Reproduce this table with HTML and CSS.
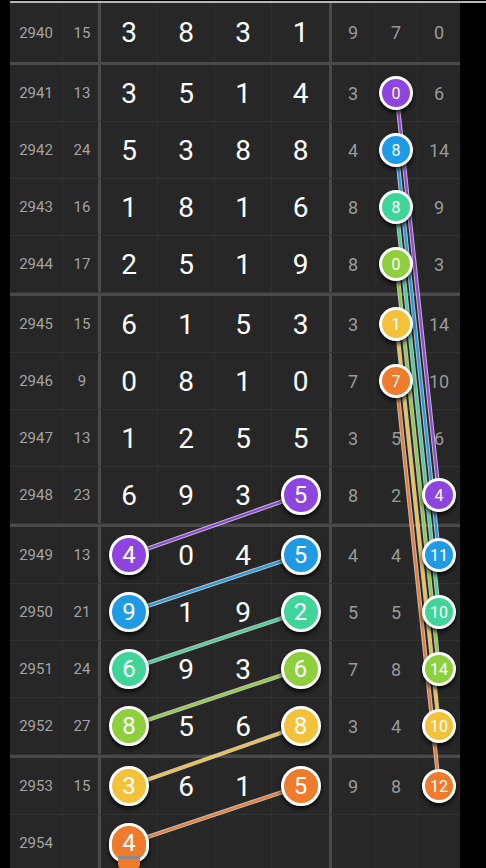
FILE: index.html
```html
<!DOCTYPE html>
<html lang="en">
<head>
  <meta charset="UTF-8">
  <meta name="viewport" content="width=device-width, initial-scale=1.0">
  <title>Draw Trend</title>
  <link rel="stylesheet" href="styles.css">
</head>
<body>
  <div class="screen">
    <div class="topline"></div>
    <div class="board">
      <div class="group">
        <div class="row first">
          <div class="issue">2940</div><div class="sum">15</div>
          <div class="d">3</div><div class="d">8</div><div class="d">3</div><div class="d d4">1</div>
          <div class="r">9</div><div class="r">7</div><div class="r">0</div>
        </div>
      </div>
      <div class="group">
        <div class="row">
          <div class="issue">2941</div><div class="sum">13</div>
          <div class="d">3</div><div class="d">5</div><div class="d">1</div><div class="d d4">4</div>
          <div class="r">3</div><div class="r"><span class="ball sm purple">0</span></div><div class="r">6</div>
        </div>
        <div class="row">
          <div class="issue">2942</div><div class="sum">24</div>
          <div class="d">5</div><div class="d">3</div><div class="d">8</div><div class="d d4">8</div>
          <div class="r">4</div><div class="r"><span class="ball sm blue">8</span></div><div class="r">14</div>
        </div>
        <div class="row">
          <div class="issue">2943</div><div class="sum">16</div>
          <div class="d">1</div><div class="d">8</div><div class="d">1</div><div class="d d4">6</div>
          <div class="r">8</div><div class="r"><span class="ball sm teal">8</span></div><div class="r">9</div>
        </div>
        <div class="row">
          <div class="issue">2944</div><div class="sum">17</div>
          <div class="d">2</div><div class="d">5</div><div class="d">1</div><div class="d d4">9</div>
          <div class="r">8</div><div class="r"><span class="ball sm lime">0</span></div><div class="r">3</div>
        </div>
      </div>
      <div class="group">
        <div class="row">
          <div class="issue">2945</div><div class="sum">15</div>
          <div class="d">6</div><div class="d">1</div><div class="d">5</div><div class="d d4">3</div>
          <div class="r">3</div><div class="r"><span class="ball sm yellow">1</span></div><div class="r">14</div>
        </div>
        <div class="row">
          <div class="issue">2946</div><div class="sum">9</div>
          <div class="d">0</div><div class="d">8</div><div class="d">1</div><div class="d d4">0</div>
          <div class="r">7</div><div class="r"><span class="ball sm orange">7</span></div><div class="r">10</div>
        </div>
        <div class="row">
          <div class="issue">2947</div><div class="sum">13</div>
          <div class="d">1</div><div class="d">2</div><div class="d">5</div><div class="d d4">5</div>
          <div class="r">3</div><div class="r">5</div><div class="r">6</div>
        </div>
        <div class="row">
          <div class="issue">2948</div><div class="sum">23</div>
          <div class="d">6</div><div class="d">9</div><div class="d">3</div><div class="d d4"><span class="ball purple">5</span></div>
          <div class="r">8</div><div class="r">2</div><div class="r"><span class="ball sm purple">4</span></div>
        </div>
      </div>
      <div class="group">
        <div class="row">
          <div class="issue">2949</div><div class="sum">13</div>
          <div class="d"><span class="ball purple">4</span></div><div class="d">0</div><div class="d">4</div><div class="d d4"><span class="ball blue">5</span></div>
          <div class="r">4</div><div class="r">4</div><div class="r"><span class="ball sm blue">11</span></div>
        </div>
        <div class="row">
          <div class="issue">2950</div><div class="sum">21</div>
          <div class="d"><span class="ball blue">9</span></div><div class="d">1</div><div class="d">9</div><div class="d d4"><span class="ball teal">2</span></div>
          <div class="r">5</div><div class="r">5</div><div class="r"><span class="ball sm teal">10</span></div>
        </div>
        <div class="row">
          <div class="issue">2951</div><div class="sum">24</div>
          <div class="d"><span class="ball teal">6</span></div><div class="d">9</div><div class="d">3</div><div class="d d4"><span class="ball lime">6</span></div>
          <div class="r">7</div><div class="r">8</div><div class="r"><span class="ball sm lime">14</span></div>
        </div>
        <div class="row">
          <div class="issue">2952</div><div class="sum">27</div>
          <div class="d"><span class="ball lime">8</span></div><div class="d">5</div><div class="d">6</div><div class="d d4"><span class="ball yellow">8</span></div>
          <div class="r">3</div><div class="r">4</div><div class="r"><span class="ball sm yellow">10</span></div>
        </div>
      </div>
      <div class="group">
        <div class="row">
          <div class="issue">2953</div><div class="sum">15</div>
          <div class="d"><span class="ball yellow">3</span></div><div class="d">6</div><div class="d">1</div><div class="d d4"><span class="ball orange">5</span></div>
          <div class="r">9</div><div class="r">8</div><div class="r"><span class="ball sm orange">12</span></div>
        </div>
        <div class="row">
          <div class="issue">2954</div><div class="sum"></div>
          <div class="d"><span class="ball orange pending">4<span class="tail"></span></span></div><div class="d"></div><div class="d"></div><div class="d d4"></div>
          <div class="r"></div><div class="r"></div><div class="r"></div>
        </div>
      </div>
    </div>

    <!-- trend lines between hit balls -->
    <svg class="links" width="486" height="868" viewBox="0 0 486 868">
      <g class="halo">
        <line x1="300.5" y1="495" x2="129.5" y2="555"/>
        <line x1="300.5" y1="555" x2="129.5" y2="612"/>
        <line x1="300.5" y1="612" x2="129.5" y2="669"/>
        <line x1="300.5" y1="669" x2="129.5" y2="726"/>
        <line x1="300.5" y1="726" x2="129.5" y2="786"/>
        <line x1="300.5" y1="786" x2="129.5" y2="843"/>
        <line x1="396.5" y1="93" x2="439" y2="495"/>
        <line x1="396.5" y1="150" x2="439" y2="555"/>
        <line x1="396.5" y1="207" x2="439" y2="612"/>
        <line x1="396.5" y1="264" x2="439" y2="669"/>
        <line x1="396.5" y1="324" x2="439" y2="726"/>
        <line x1="396.5" y1="381" x2="439" y2="786"/>
      </g>
      <line class="l-purple" x1="300.5" y1="495" x2="129.5" y2="555"/>
      <line class="l-blue" x1="300.5" y1="555" x2="129.5" y2="612"/>
      <line class="l-teal" x1="300.5" y1="612" x2="129.5" y2="669"/>
      <line class="l-lime" x1="300.5" y1="669" x2="129.5" y2="726"/>
      <line class="l-yellow" x1="300.5" y1="726" x2="129.5" y2="786"/>
      <line class="l-orange" x1="300.5" y1="786" x2="129.5" y2="843"/>
      <line class="l-purple" x1="396.5" y1="93" x2="439" y2="495"/>
      <line class="l-blue" x1="396.5" y1="150" x2="439" y2="555"/>
      <line class="l-teal" x1="396.5" y1="207" x2="439" y2="612"/>
      <line class="l-lime" x1="396.5" y1="264" x2="439" y2="669"/>
      <line class="l-yellow" x1="396.5" y1="324" x2="439" y2="726"/>
      <line class="l-orange" x1="396.5" y1="381" x2="439" y2="786"/>
    </svg>
  </div>
</body>
</html>
```

FILE: styles.css
```css
:root {
  --cell: #272727;
  --rule: #4a4a4a;
  --purple: #8e45df;
  --blue: #1f9be6;
  --teal: #3fd598;
  --lime: #8ecf3e;
  --yellow: #f4c23a;
  --orange: #ef7b2c;
}
* { box-sizing: border-box; }
body {
  margin: 0;
  background: #000;
  font-family: Roboto, "Liberation Sans", sans-serif;
}
.screen {
  position: relative;
  width: 486px;
  height: 868px;
  overflow: hidden;
}
.topline {
  margin: 1px 0 0 10px;
  height: 2px;
  background: #b8b8b8;
}
.board {
  width: 450px;
  margin-left: 10px;
  background: var(--cell);
}
.group {
  border-bottom: 3px solid var(--rule);
}
.row {
  display: grid;
  grid-template-columns: 53px 38px 57px 57px 57px 60px 43px 43px 42px;
  height: 57px;
  border-bottom: 1px solid #333;
}
.row.first { height: 59px; border-bottom: 0; }
.row > div {
  display: flex;
  align-items: center;
  justify-content: center;
  border-right: 1px solid #2f2f2f;
}
.row > div:last-child { border-right: 0; }
.row .sum, .row .d4 { border-right: 3px solid var(--rule); }

.issue {
  font-size: 15px;
  color: #a3a3a3;
}
.sum {
  font-size: 15px;
  color: #a3a3a3;
  padding-left: 3px;
}
.d {
  font-size: 28px;
  color: #fff;
}
.r {
  font-size: 18px;
  color: #9a9a9a;
}

.ball {
  position: relative;
  z-index: 2;
  width: 40px;
  height: 40px;
  border-radius: 50%;
  border: 3px solid #fff;
  display: flex;
  align-items: center;
  justify-content: center;
  color: #fff;
  font-size: 24px;
  box-shadow: 0 3px 4px rgba(0,0,0,0.75);
}
.ball.sm {
  width: 34px;
  height: 34px;
  font-size: 16px;
}
.purple { background: var(--purple); }
.blue { background: var(--blue); }
.teal { background: var(--teal); }
.lime { background: var(--lime); }
.yellow { background: var(--yellow); }
.orange { background: var(--orange); }

.pending { border-radius: 50% 50% 40% 40%; }
.pending .tail {
  position: absolute;
  left: 6px;
  top: 30px;
  width: 22px;
  height: 14px;
  background: var(--orange);
  border-radius: 0 0 6px 6px;
  border-top: 3px solid #8a8a8a;
}

.links {
  position: absolute;
  top: 0;
  left: 0;
  z-index: 1;
  pointer-events: none;
}
.links line { stroke-linecap: round; stroke-width: 2.2; }
.links .halo line { stroke: rgba(255,255,255,0.7); stroke-width: 4.2; }
.l-purple { stroke: var(--purple); }
.l-blue { stroke: var(--blue); }
.l-teal { stroke: var(--teal); }
.l-lime { stroke: var(--lime); }
.l-yellow { stroke: var(--yellow); }
.l-orange { stroke: var(--orange); }
```
